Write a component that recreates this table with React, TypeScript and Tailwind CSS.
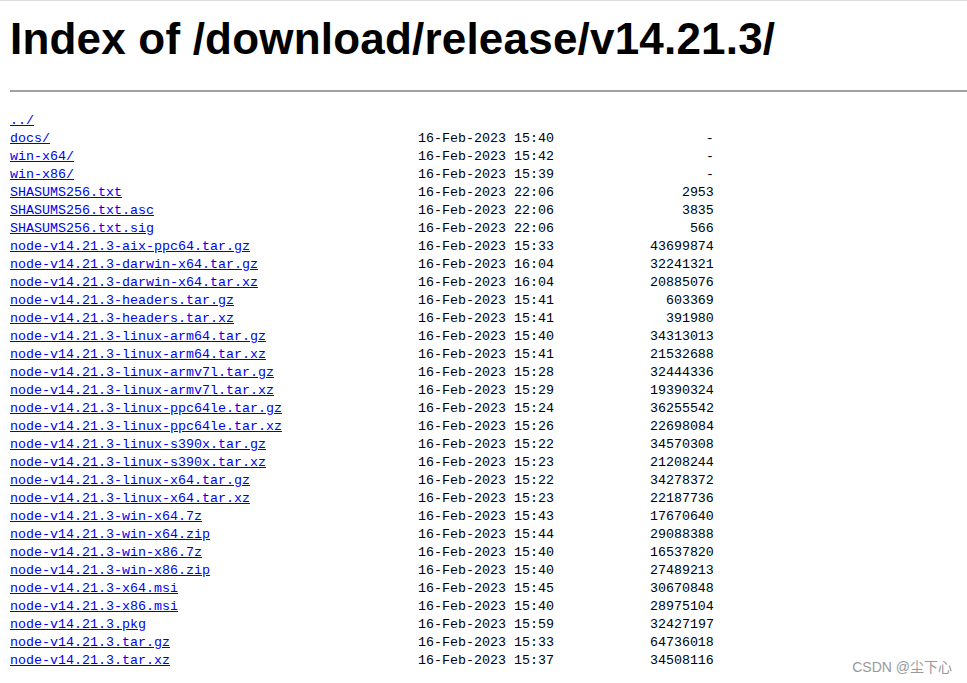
const rows: [string, string, string][] = [
  ["docs/", "16-Feb-2023 15:40", "-"],
  ["win-x64/", "16-Feb-2023 15:42", "-"],
  ["win-x86/", "16-Feb-2023 15:39", "-"],
  ["SHASUMS256.txt", "16-Feb-2023 22:06", "2953"],
  ["SHASUMS256.txt.asc", "16-Feb-2023 22:06", "3835"],
  ["SHASUMS256.txt.sig", "16-Feb-2023 22:06", "566"],
  ["node-v14.21.3-aix-ppc64.tar.gz", "16-Feb-2023 15:33", "43699874"],
  ["node-v14.21.3-darwin-x64.tar.gz", "16-Feb-2023 16:04", "32241321"],
  ["node-v14.21.3-darwin-x64.tar.xz", "16-Feb-2023 16:04", "20885076"],
  ["node-v14.21.3-headers.tar.gz", "16-Feb-2023 15:41", "603369"],
  ["node-v14.21.3-headers.tar.xz", "16-Feb-2023 15:41", "391980"],
  ["node-v14.21.3-linux-arm64.tar.gz", "16-Feb-2023 15:40", "34313013"],
  ["node-v14.21.3-linux-arm64.tar.xz", "16-Feb-2023 15:41", "21532688"],
  ["node-v14.21.3-linux-armv7l.tar.gz", "16-Feb-2023 15:28", "32444336"],
  ["node-v14.21.3-linux-armv7l.tar.xz", "16-Feb-2023 15:29", "19390324"],
  ["node-v14.21.3-linux-ppc64le.tar.gz", "16-Feb-2023 15:24", "36255542"],
  ["node-v14.21.3-linux-ppc64le.tar.xz", "16-Feb-2023 15:26", "22698084"],
  ["node-v14.21.3-linux-s390x.tar.gz", "16-Feb-2023 15:22", "34570308"],
  ["node-v14.21.3-linux-s390x.tar.xz", "16-Feb-2023 15:23", "21208244"],
  ["node-v14.21.3-linux-x64.tar.gz", "16-Feb-2023 15:22", "34278372"],
  ["node-v14.21.3-linux-x64.tar.xz", "16-Feb-2023 15:23", "22187736"],
  ["node-v14.21.3-win-x64.7z", "16-Feb-2023 15:43", "17670640"],
  ["node-v14.21.3-win-x64.zip", "16-Feb-2023 15:44", "29088388"],
  ["node-v14.21.3-win-x86.7z", "16-Feb-2023 15:40", "16537820"],
  ["node-v14.21.3-win-x86.zip", "16-Feb-2023 15:40", "27489213"],
  ["node-v14.21.3-x64.msi", "16-Feb-2023 15:45", "30670848"],
  ["node-v14.21.3-x86.msi", "16-Feb-2023 15:40", "28975104"],
  ["node-v14.21.3.pkg", "16-Feb-2023 15:59", "32427197"],
  ["node-v14.21.3.tar.gz", "16-Feb-2023 15:33", "64736018"],
  ["node-v14.21.3.tar.xz", "16-Feb-2023 15:37", "34508116"],
];

export default function App() {
  return (
    <div className="relative min-h-screen bg-white border-t border-[#dcdcdf] pl-[10px] text-black">
      <h1 className="pt-[13px] text-[44px] leading-[50px] tracking-[0.2px] font-bold font-['Liberation_Sans',Arial,sans-serif]">
        Index of /download/release/v14.21.3/
      </h1>
      <hr className="mt-[26px] border-0 h-[2px] bg-[#a0a0a0]" />
      <pre className="mt-[20px] font-['Liberation_Mono',monospace] text-[13.333px] leading-[18px] whitespace-pre">
        <a href="#" className="text-[#0000ee] underline">
          ../
        </a>
        {"\n"}
        {rows.map(([name, date, size]) => (
          <span key={name}>
            <a href="#" className="text-[#0000ee] underline">
              {name}
            </a>
            {" ".repeat(51 - name.length)}
            {date}
            {size.padStart(20)}
            {"\n"}
          </span>
        ))}
      </pre>
      <div className="absolute right-[15px] top-[656px] text-[14px] text-[#999999] font-['Liberation_Sans','Noto_Sans_CJK_SC',sans-serif]">
        CSDN @尘下心
      </div>
    </div>
  );
}
